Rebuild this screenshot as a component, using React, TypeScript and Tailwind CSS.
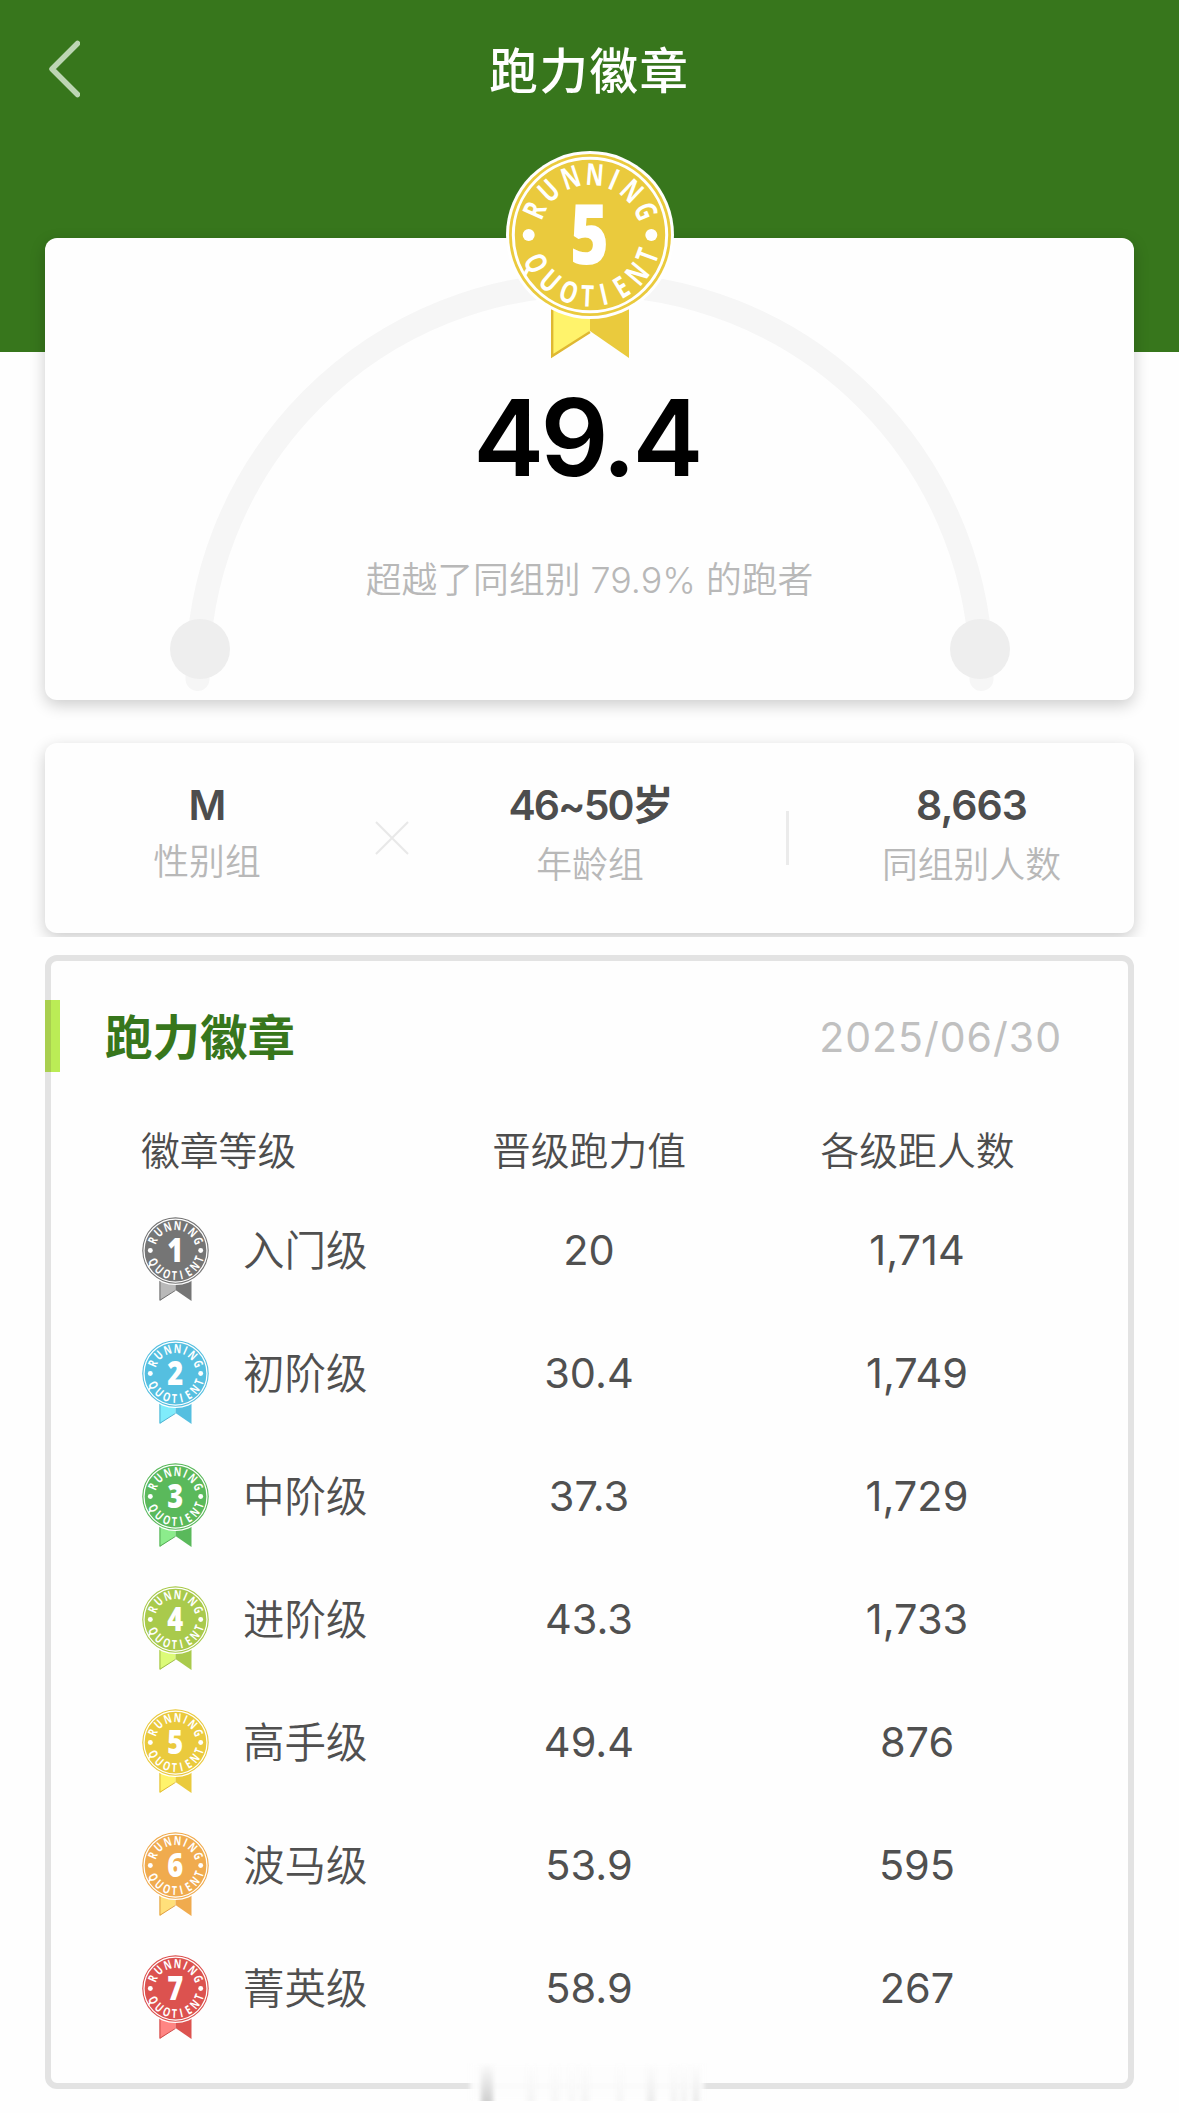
import React from 'react';
import clsx from 'clsx';

type TBadge = {
  level: number;
  main: string;
  light: string;
  edge: string;
};

type TLevel = {
  badge: TBadge;
  name: string;
  score: string;
  people: string;
};

const levels: TLevel[] = [
  { badge: { level: 1, main: '#757575', light: '#b9b9b9', edge: '#6c6c6c' }, name: '入门级', score: '20', people: '1,714' },
  { badge: { level: 2, main: '#55bfe0', light: '#80ecfb', edge: '#4fb0cf' }, name: '初阶级', score: '30.4', people: '1,749' },
  { badge: { level: 3, main: '#5ab95b', light: '#8cec8c', edge: '#52aa53' }, name: '中阶级', score: '37.3', people: '1,729' },
  { badge: { level: 4, main: '#a9ca4c', light: '#dcfb78', edge: '#9cbb44' }, name: '进阶级', score: '43.3', people: '1,733' },
  { badge: { level: 5, main: '#eaca3d', light: '#fff36b', edge: '#dfb832' }, name: '高手级', score: '49.4', people: '876' },
  { badge: { level: 6, main: '#f0ab4e', light: '#ffe07a', edge: '#e09c42' }, name: '波马级', score: '53.9', people: '595' },
  { badge: { level: 7, main: '#dc524f', light: '#ff8583', edge: '#cb4845' }, name: '菁英级', score: '58.9', people: '267' },
];

// [letter, angle] around the medal
const topLetters: [string, number][] = [
  ['R', -66], ['U', -43], ['N', -18.6], ['N', 4.5], ['I', 23.5], ['N', 43.5], ['G', 67],
];
const bottomLetters: [string, number][] = [
  ['Q', 62.5], ['U', 41], ['O', 20.5], ['T', 2.5], ['I', -13], ['E', -31], ['N', -50.5], ['T', -70],
];

function Medal({ badge, className }: { badge: TBadge; className?: string }) {
  return (
    <svg viewBox="0 0 168 208" className={className}>
      <path d="M45 140H84V180L45 207Z" fill={badge.light} />
      <path d="M84 140H123V207L84 180Z" fill={badge.main} />
      <path d="M46.2 140V205L84 181" fill="none" stroke={badge.edge} strokeWidth="2.4" />
      <circle cx="84" cy="84" r="84" fill="#fff" />
      <circle cx="84" cy="84" r="81" fill={badge.main} />
      <circle cx="84" cy="84" r="76.7" fill="none" stroke="#fff" strokeWidth="3" />
      <circle cx="22.7" cy="84" r="6" fill="#fff" />
      <circle cx="145.3" cy="84" r="6" fill="#fff" />
      <g fill="#fff" textAnchor="middle" className="font-['Open_Sans',sans-serif] font-bold">
        {topLetters.map(([letter, angle], i) => (
          <text key={i} transform={`translate(84 84) rotate(${angle}) translate(0 -50) scale(0.74 1)`} fontSize="30">
            {letter}
          </text>
        ))}
        {bottomLetters.map(([letter, angle], i) => (
          <text key={i} transform={`translate(84 84) rotate(${angle}) translate(0 71.5) scale(0.74 1)`} fontSize="30">
            {letter}
          </text>
        ))}
        <text transform="translate(83.5 113) scale(0.8 1)" fontSize="83" className="font-extrabold">
          {badge.level}
        </text>
      </g>
    </svg>
  );
}

function Header() {
  return (
    <header className="h-[352px] bg-[#37761c]">
      <div className="relative h-[144px] flex items-center justify-center">
        <svg viewBox="0 0 32 58" className="absolute left-[48px] top-[40px] w-8 h-[58px]">
          <path
            d="M29.5 3.5L4 29L29.5 54.5"
            fill="none"
            stroke="#bdd5b4"
            strokeWidth="5.5"
            strokeLinecap="round"
            strokeLinejoin="round"
          />
        </svg>
        <h1 className="text-[48.5px] leading-[60px] tracking-[1.6px] font-medium text-white">跑力徽章</h1>
      </div>
    </header>
  );
}

function ScoreCard() {
  return (
    <section className="relative h-[462px] rounded-xl bg-[#fefefe] shadow-[0_5px_16px_rgba(0,0,0,0.2)] flex flex-col items-center">
      <svg viewBox="0 0 1089 462" className="absolute inset-0 w-full h-full">
        <path d="M152.51 441A392 392 0 1 1 936.49 441" fill="none" stroke="#f6f6f6" strokeWidth="24" strokeLinecap="round" />
        <circle cx="155" cy="411" r="30" fill="#eeeeee" />
        <circle cx="935" cy="411" r="30" fill="#eeeeee" />
      </svg>
      <Medal badge={levels[4].badge} className="relative w-[168px] h-[208px] -mt-[87px]" />
      <div className="relative mt-[14px] h-[130px] text-[106.5px] leading-[130px] tracking-[-3.6px] -ml-[6px] font-semibold text-black">49.4</div>
      <p className="relative mt-[52px] text-[35.8px] leading-[50px] font-[350] text-[#b8b8b8]">超越了同组别 79.9% 的跑者</p>
    </section>
  );
}

type TStatProps = {
  value: string;
  label: string;
  className?: string;
  valueClass?: string;
  labelClass?: string;
};

function Stat({ value, label, className, valueClass = 'tracking-[-1px]', labelClass = 'mt-[10px]' }: TStatProps) {
  return (
    <div className={clsx('flex flex-col items-center', className)}>
      <div className={clsx('h-[50px] text-[41px] leading-[50px] font-semibold text-[#4d4d4d] whitespace-nowrap', valueClass)}>
        {value}
      </div>
      <div className={clsx('text-[35.8px] leading-[50px] font-[350] text-[#b8b8b8]', labelClass)}>{label}</div>
    </div>
  );
}

function GroupCard() {
  return (
    <div className="-mx-[45px] mt-[23px] h-[214px] px-[45px] pt-5 overflow-hidden">
      <section className="h-[190px] rounded-xl bg-[#fefefe] shadow-[0_5px_16px_rgba(0,0,0,0.2)] flex items-start pt-[37px]">
        <Stat value="M" label="性别组" className="w-[324px]" labelClass="mt-[7px]" />
        <svg viewBox="0 0 34 34" className="w-[34px] h-[34px] mt-[41px] ml-[6px]">
          <path d="M1 1L33 33M33 1L1 33" stroke="#e8e8e8" strokeWidth="2" />
        </svg>
        <Stat value="46~50岁" label="年龄组" className="w-[362px]" valueClass="tracking-[-2px]" />
        <div className="w-[3px] h-[54px] mt-[31px] ml-[15px] bg-[#ebebeb]" />
        <Stat value="8,663" label="同组别人数" className="w-[345px] pl-[20px]" />
      </section>
    </div>
  );
}

function LevelTable() {
  return (
    <section className="mt-[18px] h-[1134px] rounded-xl border-[6px] border-[#e3e3e3] bg-[#fefefe]">
      <div className="pt-[39px] flex items-center -ml-[6px]">
        <div className="w-[15px] h-[72px] flex bg-[#bbec56]">
          <div className="w-[6px] h-full bg-[#a9cf4f]" />
        </div>
        <h2 className="ml-[45px] h-[72px] pt-0.5 text-[47.5px] leading-[72px] font-semibold text-[#37761c]">跑力徽章</h2>
        <span className="ml-auto mr-[66px] pt-0.5 text-[41px] leading-[70px] tracking-[1px] text-[#c0c0c0]">2025/06/30</span>
      </div>
      <div className="mt-[49px] mb-[-1px] grid grid-cols-[375px_326px_328px] h-[60px] items-center text-[38.8px] leading-[60px] font-[350] text-[#4d4d4d]">
        <div className="pl-[90px]">徽章等级</div>
        <div className="text-center">晋级跑力值</div>
        <div className="text-center pl-[3px]">各级距人数</div>
      </div>
      {levels.map((item) => (
        <div
          key={item.name}
          className="grid grid-cols-[375px_326px_328px] h-[122.9px] items-center text-[41.5px] leading-[60px] text-[#505050] relative top-[9px]"
        >
          <div className="pl-[90px] flex items-center">
            <Medal badge={item.badge} className="w-[69px] h-[85.5px] mt-[17px]" />
            <span className="ml-[33px] pt-0.5 font-[350]">{item.name}</span>
          </div>
          <div className="text-center">{item.score}</div>
          <div className="text-center pl-[2px]">{item.people}</div>
        </div>
      ))}
    </section>
  );
}

// faint text fading in over the bottom edge
const ghosts: { w: string; c: string }[] = [
  { w: 'w-3 ml-[15px]', c: 'to-[#cccccc]' },
  { w: 'w-2 ml-[34px]', c: 'to-[#f4f4f4]' },
  { w: 'w-2 ml-4', c: 'to-[#f6f6f6]' },
  { w: 'w-1.5 ml-2.5', c: 'to-[#f6f6f6]' },
  { w: 'w-2 ml-1.5', c: 'to-[#f4f4f4]' },
  { w: 'w-1.5 ml-7', c: 'to-[#f4f4f4]' },
  { w: 'w-2 ml-6', c: 'to-[#ebebeb]' },
  { w: 'w-1.5 ml-4', c: 'to-[#f1f1f1]' },
  { w: 'w-1.5 ml-1', c: 'to-[#f1f1f1]' },
  { w: 'w-1.5 ml-1.5', c: 'to-[#e8e8e8]' },
];

function App() {
  return (
    <div className="relative w-[1179px] h-[2113px] overflow-hidden bg-[#fefefe] font-['Inter','Noto_Sans_CJK_SC',sans-serif]">
      <Header />
      <main className="px-[45px] -mt-[114px]">
        <ScoreCard />
        <GroupCard />
        <LevelTable />
      </main>
      <div className="absolute left-[466px] top-[2063px] w-[242px] h-[38px] overflow-hidden">
        <div className="absolute inset-x-1 inset-y-0 bg-[#fdfdfd]/90 blur-[2px]" />
        <div className="relative flex h-full blur-[2px]">
          {ghosts.map((ghost, i) => (
            <div key={i} className={clsx('h-[42px] bg-gradient-to-b from-[#fdfdfd]', ghost.w, ghost.c)} />
          ))}
        </div>
      </div>
    </div>
  );
}

export default App;
